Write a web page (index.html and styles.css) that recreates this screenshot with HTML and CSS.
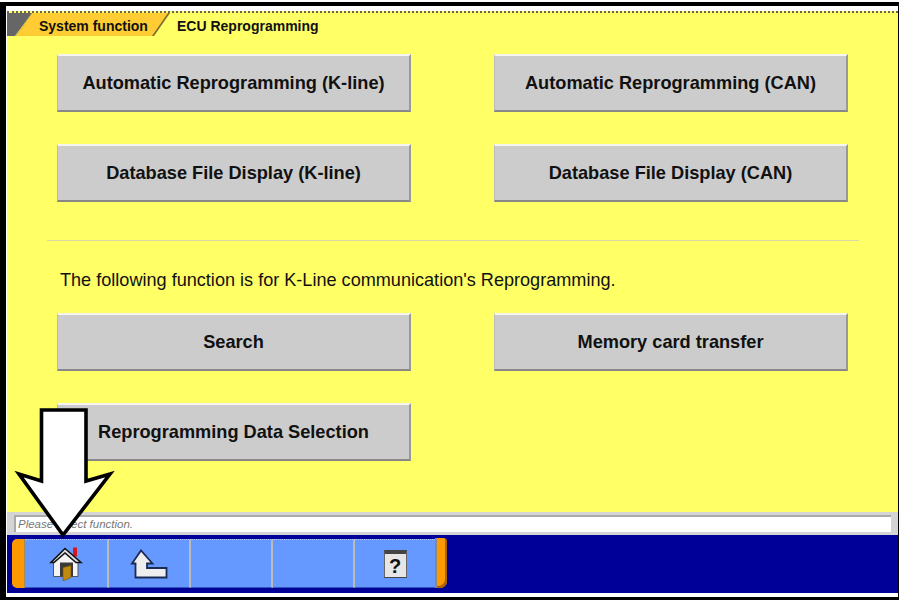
FILE: index.html
```html
<!DOCTYPE html>
<html lang="en">
<head>
  <meta charset="UTF-8">
  <title>ECU Reprogramming</title>
  <link rel="stylesheet" href="styles.css">
</head>
<body>

  <div class="frame">
    <div class="tabs">
      <div class="tab-corner"></div>
      <div class="tab-edge">
        <div class="tab-back">System function</div>
      </div>
      <div class="tab-current">ECU Reprogramming</div>
    </div>

    <div class="main">
      <div class="btn-grid">
        <button class="btn">Automatic Reprogramming (K-line)</button>
        <button class="btn">Automatic Reprogramming (CAN)</button>
        <button class="btn">Database File Display (K-line)</button>
        <button class="btn">Database File Display (CAN)</button>
      </div>
      <div class="rule"></div>
      <p class="note">The following function is for K-Line communication's Reprogramming.</p>
      <div class="btn-grid">
        <button class="btn">Search</button>
        <button class="btn">Memory card transfer</button>
        <button class="btn">Reprogramming Data Selection</button>
      </div>
    </div>

    <div class="status">
      <div class="status-box">Please select function.</div>
    </div>

    <div class="toolbar">
      <div class="cap cap-left"></div>
      <div class="tool tool-home">
        <svg width="34" height="35" viewBox="0 0 34 35">
          <path d="M24 1.500h4v9h-4z" fill="#d81818"/>
          <path d="M4.500 15 16 5l13 10v15.500H4.500z" fill="#f4f4f4" stroke="#555" stroke-width="1"/>
          <path d="M16 2.500 2 16.500h3L16 7l11 9.500h5z" fill="#e0e0e0" stroke="#111" stroke-width="1.600"/>
          <path d="M11 16.500h13v14H11z" fill="#3a3a3a"/>
          <path d="M14 21.500l8-2v12l-8 3.500z" fill="#c08a10" stroke="#6b4e00" stroke-width=".6"/>
        </svg>
      </div>
      <div class="tool">
        <svg width="38" height="32" viewBox="0 0 38 32">
          <path d="M11 2.500 2 15.500h3.500v14H36.500v-9.500H17V15.500h5.500z" fill="#eeeeee" stroke="#1a2a55" stroke-width="1.800"/>
        </svg>
      </div>
      <div class="tool"></div>
      <div class="tool"></div>
      <div class="tool tool-help">
        <div class="help">?</div>
      </div>
      <div class="cap cap-right"></div>
    </div>

    <svg class="arrow" width="110" height="140" viewBox="0 0 110 140">
      <path d="M35.500 4H80V75l24-7-47 61L13 68l22.500 7z" fill="#fff" stroke="#000" stroke-width="3.600"/>
    </svg>
  </div>

</body>
</html>
```

FILE: styles.css
```css
* {
  box-sizing: border-box;
}

body {
  margin: 0;
  background-color: white;
  font-family: "Liberation Sans", Arial, sans-serif;
}

.frame {
  position: relative;
  width: 899px;
  height: 598px;
  margin-top: 2px;
  padding-top: 5px;
  border-top: 4px solid black;
  border-left: 6px solid black;
  border-right: 1px solid black;
  border-bottom: 3px solid black;
  background-color: white;
  display: flex;
  flex-direction: column;
}

.tabs {
  display: flex;
  height: 25px;
  margin-left: 1px;
  background-color: #ffff66;
  border-top: 2px dotted #6a6450;
  font-weight: bold;
  font-size: 14px;
  line-height: 16px;
  color: #111;
}

.tab-corner {
  width: 25px;
  margin-right: -16px;
  background-color: #666;
  clip-path: polygon(0 0, 100% 0, 32% 100%, 0 100%);
}

.tab-edge {
  width: 154px;
  background-color: #7a6a30;
  clip-path: polygon(16px 0, 100% 0, 138px 100%, 0 100%);
}

.tab-back {
  width: 152px;
  height: 100%;
  padding: 5px 0 0 23px;
  background-color: #ffcc33;
  clip-path: polygon(16px 0, 100% 0, 136px 100%, 0 100%);
}

.tab-current {
  padding: 5px 0 0 7px;
}

.main {
  height: 476px;
  padding: 18px 39px 0 40px;
  margin-left: 1px;
  background-color: #ffff66;
}

.btn-grid {
  display: grid;
  grid-template-columns: 354px 354px;
  grid-auto-rows: 58px;
  column-gap: 83px;
  row-gap: 32px;
  margin-left: 10px;
}

.btn {
  padding: 0;
  font-family: inherit;
  font-size: 18.2px;
  font-weight: bold;
  color: #111;
  background-color: #cccccc;
  border: none;
  border-top: 2px solid #f5f5f0;
  border-left: 1px solid #bbbbbb;
  border-right: 2px solid #999;
  border-bottom: 2px solid #888;
}

.rule {
  height: 1px;
  margin: 38px 0 0;
  width: 812px;
  background-color: #d8d8a0;
}

.note {
  margin: 29px 0 23px 13px;
  font-size: 18.1px;
  line-height: 20px;
  color: #111;
}

.status {
  height: 23px;
  margin-left: 1px;
  padding: 3px 7px;
  background-color: #d4d4d4;
}

.status-box {
  height: 17px;
  padding-left: 2px;
  background-color: white;
  border-top: 2px solid #aaa;
  border-left: 2px solid #aaa;
  font-size: 11.500px;
  font-style: italic;
  line-height: 15px;
  color: #777;
}

.toolbar {
  flex: none;
  height: 58px;
  margin-left: 1px;
  padding: 4px 0 5px 5px;
  background-color: #000099;
  display: flex;
}

.tool {
  width: 82px;
  background-color: #6699ff;
  border-top: 1px dotted #a9c4ff;
  border-bottom: 1px solid #3355bb;
  border-right: 2px solid #bbb;
  display: flex;
  align-items: center;
  justify-content: center;
}

.tool-home {
  width: 84px;
}

.tool-help {
  width: 80px;
  border-right: none;
}

.cap {
  width: 13px;
  background-color: #ff9900;
}

.cap-left {
  border-radius: 5px 0 0 5px;
  box-shadow: inset -1px 0 0 #a58a55;
}

.cap-right {
  width: 12px;
  margin-top: -1px;
  border-left: 2px solid #888;
  border-radius: 0 4px 7px 0;
  box-shadow: inset -2px -2px 0 #a86500;
}

.help {
  width: 23px;
  height: 28px;
  border-top: 4px solid #444;
  border-bottom: 1px solid #444;
  border-left: 1px solid #666;
  border-right: 1px solid #666;
  background-color: #e6e6e6;
  font-size: 20px;
  font-weight: bold;
  line-height: 24px;
  text-align: center;
  color: #111;
}

.arrow {
  position: absolute;
  left: 0;
  top: 400px;
}
```
